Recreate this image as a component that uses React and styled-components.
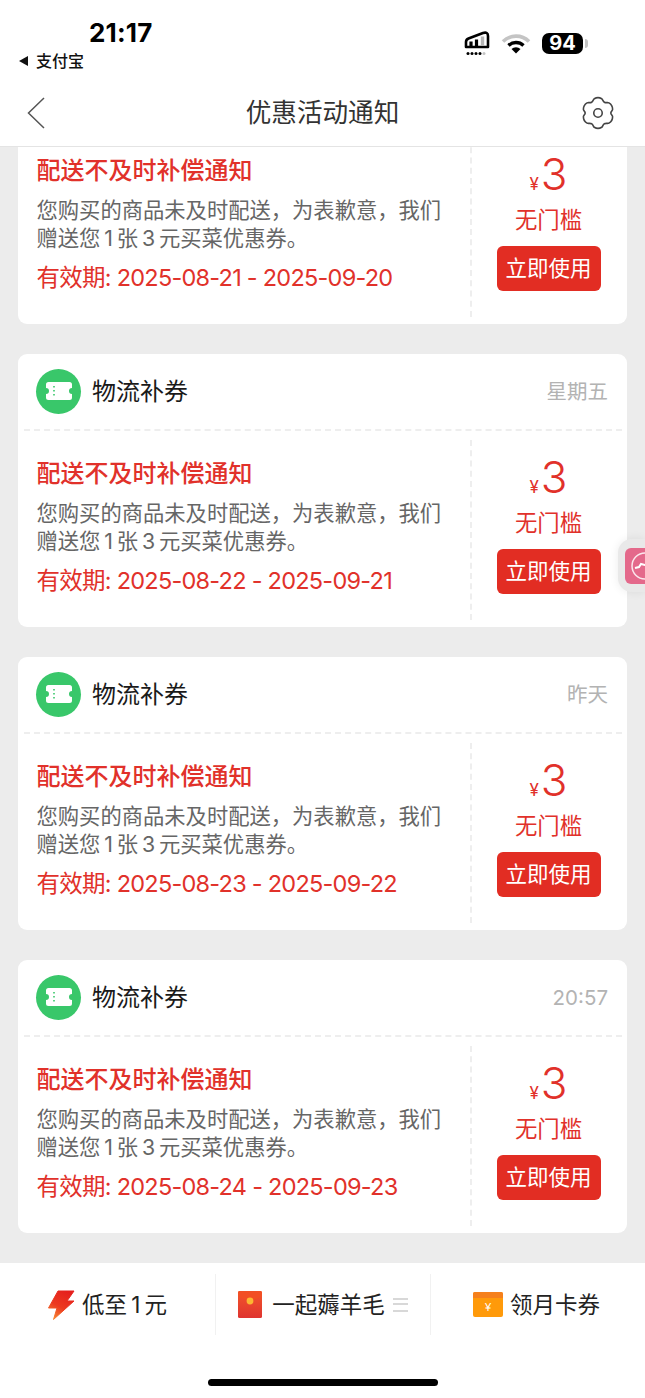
import React from "react";
import styled, { createGlobalStyle } from "styled-components";

const Global = createGlobalStyle`
  html, body { margin: 0; padding: 0; background: #fff; }
  body { font-family: "Inter", "Noto Sans CJK SC", "Noto Sans", sans-serif; }
  * { box-sizing: border-box; }
`;

const Page = styled.div`
  width: 645px;
  height: 1398px;
  display: flex;
  flex-direction: column;
  overflow: hidden;
  background: #ececec;
  position: relative;
`;
const TopArea = styled.header`
  height: 147px;
  flex: none;
  background: #fff;
  border-bottom: 1px solid #e4e4e4;
  display: flex;
  flex-direction: column;
`;
const StatusBar = styled.div`
  height: 80px;
  display: flex;
  justify-content: space-between;
  padding: 19px 62px 0 19px;
`;
const StatusLeft = styled.div`
  display: flex;
  flex-direction: column;
  align-items: flex-start;
`;
const Clock = styled.div`
  font: 700 26px/28px "Inter", "Liberation Sans", sans-serif;
  color: #000;
  margin-left: 70px;
  letter-spacing: 0.2px;
`;
const BackApp = styled.div`
  display: flex;
  align-items: center;
  gap: 7px;
  font-size: 16px;
  line-height: 20px;
  font-weight: 500;
  color: #111;
  margin-top: 4px;
`;
const StatusRight = styled.div`
  display: flex;
  align-items: center;
  gap: 11px;
  height: 48px;
  padding-top: 0;
`;
const Battery = styled.div`
  width: 41px;
  height: 21px;
  border-radius: 7px;
  background: #000;
  color: #fff;
  font: 700 20px/21px "Inter", "Liberation Sans", sans-serif;
  text-align: center;
  position: relative;
  &::after {
    content: "";
    position: absolute;
    right: -5px;
    top: 6px;
    width: 3px;
    height: 9px;
    border-radius: 0 3px 3px 0;
    background: #c4c4c4;
  }
`;
const NavBar = styled.nav`
  flex: 1;
  display: flex;
  align-items: center;
  justify-content: space-between;
  padding: 0 29px 0 26px;
  position: relative;
`;
const NavTitle = styled.h1`
  position: absolute;
  left: 0;
  right: 0;
  margin: 0;
  text-align: center;
  font-size: 25.6px;
  line-height: 36px;
  font-weight: 400;
  color: #333;
`;
const Feed = styled.main`
  flex: 1;
  min-height: 0;
  overflow: hidden;
  display: flex;
  flex-direction: column;
  justify-content: flex-end;
  gap: 30px;
  padding: 0 18px 30px;
`;
const Card = styled.article`
  flex: none;
  height: 273px;
  background: #fff;
  border-radius: 9px;
  display: flex;
  flex-direction: column;
`;
const CardHead = styled.div`
  height: 77px;
  flex: none;
  margin: 0 5px 0 6px;
  padding: 0 14px 0 12px;
  display: flex;
  align-items: center;
  border-bottom: 2px dashed #eeeeee;
`;
const Avatar = styled.div`
  width: 45px;
  height: 45px;
  border-radius: 50%;
  background: #39c76a;
  display: flex;
  align-items: center;
  justify-content: center;
  margin-right: 11px;
  margin-bottom: 1px;
`;
const Sender = styled.div`
  flex: 1;
  font-size: 24px;
  line-height: 32px;
  color: #1a1a1a;
`;
const When = styled.div`
  font-size: 20.500px;
  line-height: 28px;
  color: #b3b3b3;
`;
const CardBody = styled.div`
  flex: 1;
  display: flex;
  min-height: 0;
`;
const Info = styled.div`
  width: 452px;
  flex: none;
  padding: 28px 0 0 18.500px;
`;
const Title = styled.div`
  font-size: 24px;
  line-height: 30px;
  font-weight: 500;
  color: #e1312a;
`;
const Desc = styled.p`
  margin: 11px 0 0;
  width: 415px;
  font-size: 21.3px;
  line-height: 27.500px;
  color: #666;
`;
const Validity = styled.div`
  margin-top: 11px;
  font-size: 23.500px;
  line-height: 30px;
  letter-spacing: -0.75px;
  color: #e1312a;
`;
const Side = styled.div`
  flex: 1;
  margin-top: 9px;
  margin-bottom: 7px;
  border-left: 2px dashed #eeeeee;
  display: flex;
  flex-direction: column;
  align-items: center;
  padding-right: 2px;
  padding-top: 9px;
`;
const Price = styled.div`
  display: flex;
  align-items: baseline;
  color: #e1312a;
  height: 56px;
  font-family: "Inter", "Liberation Sans", sans-serif;
`;
const Yen = styled.span`
  font-size: 17px;
  margin-right: 2px;
`;
const Amount = styled.span`
  font-size: 44px;
  line-height: 56px;
  font-weight: 300;
`;
const Threshold = styled.div`
  font-size: 22.4px;
  line-height: 30px;
  color: #e1312a;
  margin-top: 3px;
`;
const UseButton = styled.button`
  width: 104px;
  height: 45px;
  margin-top: 11px;
  border: 0;
  border-radius: 6px;
  background: #e22d23;
  color: #fff;
  font: 400 21.500px/38px "Noto Sans CJK SC", sans-serif;
  padding: 0 0 3px;
`;
const Floater = styled.div`
  position: absolute;
  right: 0;
  top: 539px;
  width: 27px;
  height: 53px;
  background: #e9e9e9;
  border-radius: 14px 0 0 14px;
  box-shadow: 0 0 10px rgba(0, 0, 0, 0.08);
  padding: 9px 0 0 7px;
  overflow: hidden;
`;
const TabBar = styled.footer`
  height: 135px;
  flex: none;
  background: #fff;
  padding-top: 11px;
  display: flex;
  flex-direction: column;
  position: relative;
`;
const Tabs = styled.div`
  display: grid;
  grid-template-columns: 215px 215px 212px;
  height: 61px;
`;
const Tab = styled.div`
  display: flex;
  align-items: center;
  justify-content: center;
  gap: 7px;
  font-size: 22.5px;
  line-height: 26px;
  color: #222;
  & + & {
    border-left: 1px solid #f1f1f1;
  }
`;
const TabLabel = styled.span`
  margin-top: 1px;
`;
const Lines = styled.span`
  width: 15px;
  height: 14px;
  margin-left: 1px;
  border-top: 2.500px solid #d8d8d8;
  border-bottom: 2.500px solid #d8d8d8;
  position: relative;
  &::after {
    content: "";
    position: absolute;
    left: 0;
    right: 0;
    top: 3.25px;
    height: 2.500px;
    background: #d8d8d8;
  }
`;
const PacketSvg = styled.svg`
  margin-right: 3px;
`;
const HomeBar = styled.div`
  position: absolute;
  left: 208px;
  bottom: 12px;
  width: 230px;
  height: 7px;
  border-radius: 4px;
  background: #000;
`;

const Ticket = () => (
  <svg width="26" height="18" viewBox="0 0 26 18">
    <path fill="#fff" d="M2.500 0h21A2.500 2.500 0 0 1 26 2.500V6a3 3 0 0 0 0 6v3.500a2.500 2.500 0 0 1-2.500 2.500h-21A2.500 2.500 0 0 1 0 15.500V12a3 3 0 0 0 0-6V2.500A2.500 2.500 0 0 1 2.500 0z" />
    <path stroke="#39c76a" strokeWidth="1.600" strokeDasharray="1.600 2.400" d="M8 4v11" />
  </svg>
);

const Signal = () => (
  <svg width="26" height="28" viewBox="0 0 26 28">
    <path d="M2 18v-5q0-2.500 2.500-3.500L19 4q5-1.500 5 3v11z" fill="none" stroke="#000" strokeWidth="2.600" strokeLinejoin="round" />
    <path d="M7 18v-5.500M12.500 18v-7.500" stroke="#000" strokeWidth="3.200" />
    <path d="M18.500 17V7.500" stroke="#b5b5b5" strokeWidth="3.400" />
    <circle cx="4" cy="24.500" r="1.500" />
    <circle cx="8" cy="24.500" r="1.500" />
    <circle cx="12" cy="24.500" r="1.500" />
    <circle cx="16" cy="24.500" r="1.500" />
    <circle cx="20" cy="24.500" r="1.500" fill="#c4c4c4" />
  </svg>
);

const Wifi = () => (
  <svg width="30" height="21" viewBox="0 0 30 21">
    <path d="M2 8.500a18.500 18.500 0 0 1 26 0" fill="none" stroke="#c4c4c4" strokeWidth="3.600" />
    <path d="M7.500 12.500a11 11 0 0 1 15 0" fill="none" stroke="#000" strokeWidth="3.400" />
    <path d="M15 20.500l-4.500-4.500a6.500 6.500 0 0 1 9 0z" fill="#000" />
  </svg>
);

const Back = () => (
  <svg width="22" height="34" viewBox="0 0 22 34">
    <path d="M18 2L2.500 17 18 32" fill="none" stroke="#555" strokeWidth="1.500" />
  </svg>
);

const Gear = () => (
  <svg width="36" height="36" viewBox="0 0 34 34" fill="none" stroke="#444" strokeWidth="1.500">
    <path d="M13.500 3.500c2-1.200 5-1.200 7 0 1 .6 1 2.500 2.500 3.300 1.500.9 3.200 0 4.300.6 2 1.200 3.500 3.800 3.500 6.100 0 1.200-1.700 2-1.700 3.500s1.700 2.300 1.700 3.500c0 2.300-1.500 4.900-3.500 6.100-1.100.6-2.800-.3-4.300.6-1.500.8-1.500 2.700-2.500 3.300-2 1.200-5 1.200-7 0-1-.6-1-2.500-2.500-3.300-1.500-.9-3.200 0-4.300-.6-2-1.200-3.500-3.800-3.500-6.100 0-1.200 1.700-2 1.700-3.500s-1.700-2.300-1.700-3.500c0-2.300 1.500-4.900 3.500-6.100 1.100-.6 2.800.3 4.300-.6 1.500-.8 1.500-2.700 2.500-3.300z" />
    <circle cx="17" cy="17" r="4" />
  </svg>
);

const Bolt = () => (
  <svg width="27" height="30" viewBox="0 0 27 30">
    <defs>
      <linearGradient id="bolt" x1="0.700" y1="0" x2="0.200" y2="1">
        <stop offset="0" stopColor="#e5201d" />
        <stop offset="0.550" stopColor="#ec3a20" />
        <stop offset="1" stopColor="#f78a32" />
      </linearGradient>
    </defs>
    <path fill="url(#bolt)" stroke="url(#bolt)" strokeWidth="1" strokeLinejoin="round" d="M10 1h16l-7 10h7L5.500 29.500 9 18H.5z" />
  </svg>
);

const RedPacket = () => (
  <PacketSvg width="24" height="27" viewBox="0 0 24 27">
    <defs>
      <linearGradient id="pk" x1="0" y1="0" x2="0" y2="1">
        <stop offset="0" stopColor="#f3562a" />
        <stop offset="1" stopColor="#df3430" />
      </linearGradient>
    </defs>
    <rect width="24" height="27" rx="1.500" fill="url(#pk)" />
    <path d="M0 5q12 8 24 0V1.500Q24 0 22.500 0h-21Q0 0 0 1.500z" fill="#f24f24" />
    <circle cx="12" cy="10" r="3.400" fill="#fcb732" />
  </PacketSvg>
);

const Wallet = () => (
  <svg width="30" height="25" viewBox="0 0 30 25">
    <rect width="30" height="25" rx="2" fill="#ff9a0a" />
    <path d="M0 2a2 2 0 0 1 2-2h26a2 2 0 0 1 2 2v4H0z" fill="#f5801c" />
    <text x="15" y="19" textAnchor="middle" fontSize="11" fontFamily="Liberation Sans" fill="#fff">¥</text>
  </svg>
);

const FloatIcon = () => (
  <svg width="30" height="36" viewBox="0 0 30 36">
    <rect width="30" height="36" rx="6" fill="#e4698b" />
    <circle cx="20" cy="18" r="13" fill="none" stroke="#fbe6ec" strokeWidth="1.500" />
    <path d="M10 20l4-1 2-3 4 1 6-1" fill="none" stroke="#fff" strokeWidth="2" />
  </svg>
);

const cards = [
  { when: "", start: "2025-08-21", end: "2025-09-20" },
  { when: "星期五", start: "2025-08-22", end: "2025-09-21" },
  { when: "昨天", start: "2025-08-23", end: "2025-09-22" },
  { when: "20:57", start: "2025-08-24", end: "2025-09-23" },
];

const descText =
  "您购买的商品未及时配送\uFF0C为表歉意\uFF0C我们赠送您\u20091\u2009张\u20093\u2009元买菜优惠券\u3002";

export default function App() {
  return (
    <Page>
      <Global />
      <TopArea>
        <StatusBar>
          <StatusLeft>
            <Clock>21:17</Clock>
            <BackApp>
              <svg width="10" height="10" viewBox="0 0 10 10">
                <path d="M9 0v10L0 5z" fill="#111" />
              </svg>
              支付宝
            </BackApp>
          </StatusLeft>
          <StatusRight>
            <Signal />
            <Wifi />
            <Battery>94</Battery>
          </StatusRight>
        </StatusBar>
        <NavBar>
          <Back />
          <NavTitle>优惠活动通知</NavTitle>
          <Gear />
        </NavBar>
      </TopArea>
      <Feed>
        {cards.map((c) => (
          <Card key={c.start}>
            <CardHead>
              <Avatar>
                <Ticket />
              </Avatar>
              <Sender>物流补券</Sender>
              <When>{c.when}</When>
            </CardHead>
            <CardBody>
              <Info>
                <Title>配送不及时补偿通知</Title>
                <Desc>{descText}</Desc>
                <Validity>有效期: {c.start} - {c.end}</Validity>
              </Info>
              <Side>
                <Price>
                  <Yen>¥</Yen>
                  <Amount>3</Amount>
                </Price>
                <Threshold>无门槛</Threshold>
                <UseButton>立即使用</UseButton>
              </Side>
            </CardBody>
          </Card>
        ))}
      </Feed>
      <TabBar>
        <Tabs>
          <Tab><Bolt /><TabLabel>{"低至\u20091\u2009元"}</TabLabel></Tab>
          <Tab><RedPacket /><TabLabel>一起薅羊毛</TabLabel><Lines /></Tab>
          <Tab><Wallet /><TabLabel>领月卡券</TabLabel></Tab>
        </Tabs>
        <HomeBar />
      </TabBar>
      <Floater>
        <FloatIcon />
      </Floater>
    </Page>
  );
}
